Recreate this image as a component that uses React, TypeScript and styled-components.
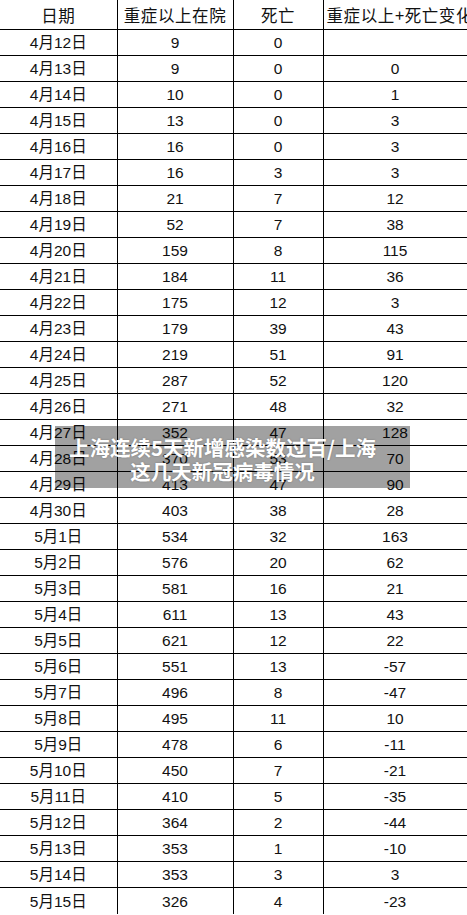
import styled, { createGlobalStyle } from "styled-components";

const GlobalStyle = createGlobalStyle`
  html, body {
    margin: 0;
    padding: 0;
    background: #fff;
  }
  body {
    font-family: "Liberation Sans", "Noto Sans CJK SC", sans-serif;
    color: #111;
  }
`;

const Wrapper = styled.div`
  position: relative;
  width: 467px;
  height: 915px;
  overflow: hidden;
`;

const Table = styled.table`
  width: 467px;
  border-collapse: collapse;
  table-layout: fixed;
`;

const HeadCell = styled.th<{ $left?: boolean }>`
  height: 29px;
  padding: 0 0 0 ${(p) => (p.$left ? "3px" : "0")};
  border-right: 1px solid #000;
  border-bottom: 1px solid #000;
  font-family: "Noto Sans CJK SC", "Liberation Sans", sans-serif;
  font-weight: 400;
  font-size: 16.5px;
  white-space: nowrap;
  overflow: hidden;
  text-align: ${(p) => (p.$left ? "left" : "center")};
  letter-spacing: 0.6px;
`;

const Row = styled.tr`
  &:last-child td {
    border-bottom: none;
    height: 26px;
  }
`;

const Cell = styled.td`
  height: 25px;
  padding: 0;
  border-right: 1px solid #000;
  border-bottom: 1px solid #000;
  text-align: center;
  font-size: 15.5px;
  line-height: 25px;
  white-space: nowrap;
`;

const Banner = styled.div`
  position: absolute;
  left: 55px;
  top: 426px;
  width: 355px;
  height: 62px;
  box-sizing: border-box;
  padding: 4px 20px 0 0;
  background: rgba(0, 0, 0, 0.37);
  display: flex;
  flex-direction: column;
  align-items: center;
  justify-content: center;
  color: #fff;
  font-family: "Noto Sans CJK SC", "Liberation Sans", sans-serif;
  font-weight: 700;
  font-size: 20.5px;
  line-height: 24px;
  text-shadow: 0 0 2px rgba(0, 0, 0, 0.25);
`;

const BannerLine = styled.div`
  white-space: nowrap;
`;

const rows: [string, string, string, string][] = [
  ["4月12日", "9", "0", ""],
  ["4月13日", "9", "0", "0"],
  ["4月14日", "10", "0", "1"],
  ["4月15日", "13", "0", "3"],
  ["4月16日", "16", "0", "3"],
  ["4月17日", "16", "3", "3"],
  ["4月18日", "21", "7", "12"],
  ["4月19日", "52", "7", "38"],
  ["4月20日", "159", "8", "115"],
  ["4月21日", "184", "11", "36"],
  ["4月22日", "175", "12", "3"],
  ["4月23日", "179", "39", "43"],
  ["4月24日", "219", "51", "91"],
  ["4月25日", "287", "52", "120"],
  ["4月26日", "271", "48", "32"],
  ["4月27日", "352", "47", "128"],
  ["4月28日", "370", "53", "70"],
  ["4月29日", "413", "47", "90"],
  ["4月30日", "403", "38", "28"],
  ["5月1日", "534", "32", "163"],
  ["5月2日", "576", "20", "62"],
  ["5月3日", "581", "16", "21"],
  ["5月4日", "611", "13", "43"],
  ["5月5日", "621", "12", "22"],
  ["5月6日", "551", "13", "-57"],
  ["5月7日", "496", "8", "-47"],
  ["5月8日", "495", "11", "10"],
  ["5月9日", "478", "6", "-11"],
  ["5月10日", "450", "7", "-21"],
  ["5月11日", "410", "5", "-35"],
  ["5月12日", "364", "2", "-44"],
  ["5月13日", "353", "1", "-10"],
  ["5月14日", "353", "3", "3"],
  ["5月15日", "326", "4", "-23"],
];

const App = () => {
  return (
    <Wrapper>
      <GlobalStyle />
      <Table>
        <colgroup>
          <col style={{ width: 117 }} />
          <col style={{ width: 116 }} />
          <col style={{ width: 90 }} />
          <col style={{ width: 144 }} />
        </colgroup>
        <thead>
          <tr>
            <HeadCell>日期</HeadCell>
            <HeadCell>重症以上在院</HeadCell>
            <HeadCell>死亡</HeadCell>
            <HeadCell $left>重症以上+死亡变化</HeadCell>
          </tr>
        </thead>
        <tbody>
          {rows.map((r) => (
            <Row key={r[0]}>
              {r.map((v, i) => (
                <Cell key={i}>{v}</Cell>
              ))}
            </Row>
          ))}
        </tbody>
      </Table>
      <Banner>
        <BannerLine>上海连续5天新增感染数过百/上海</BannerLine>
        <BannerLine>这几天新冠病毒情况</BannerLine>
      </Banner>
    </Wrapper>
  );
};

export default App;
